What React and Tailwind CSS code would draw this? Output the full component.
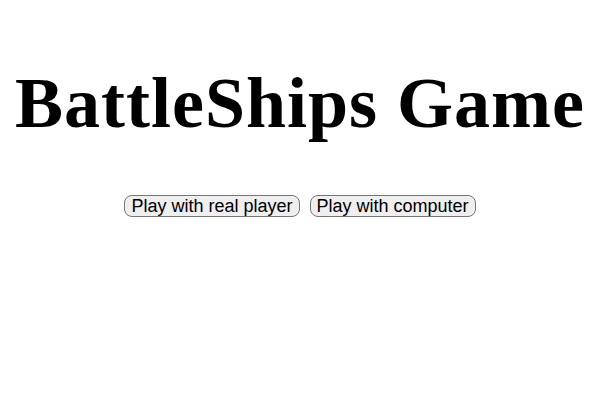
import React from 'react';

const App = () => {
    return (
        <div className="flex flex-col items-center bg-white min-h-[400px] font-['Liberation_Serif',serif]">
            <h1 className="mt-[63px] text-[72px] leading-[80px] font-bold tracking-[1px] text-black">BattleShips Game</h1>
            <div className="flex gap-[10px] mt-[52px] font-['Liberation_Sans',Arial,sans-serif]">
                <button className="px-[6px] py-0 text-[18px] leading-[20px] bg-[#efefef] border border-[#767676] rounded-[8px] text-black">
                    Play with real player
                </button>
                <button className="px-[6px] py-0 text-[18px] leading-[20px] bg-[#efefef] border border-[#767676] rounded-[8px] text-black">
                    Play with computer
                </button>
            </div>
        </div>
    );
};

export default App;
